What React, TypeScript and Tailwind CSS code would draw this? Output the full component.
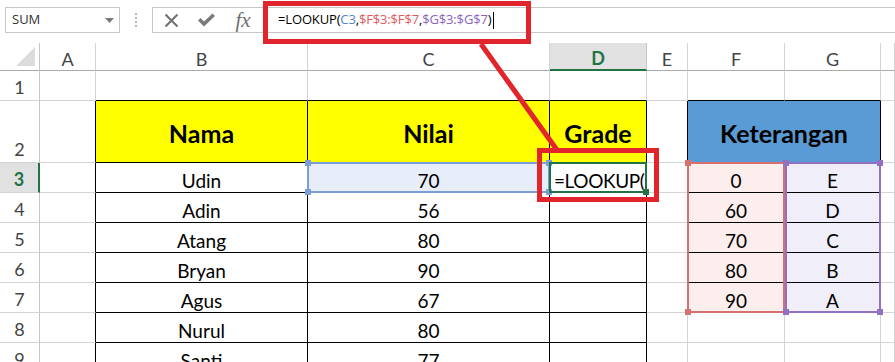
import React from "react";

const names = ["Udin", "Adin", "Atang", "Bryan", "Agus", "Nurul", "Santi"];
const nilai = [70, 56, 80, 90, 67, 80, 77];
const ket: [number, string][] = [
  [0, "E"],
  [60, "D"],
  [70, "C"],
  [80, "B"],
  [90, "A"],
];
const cols = ["A", "B", "C", "D", "E", "F", "G", ""];

// which gridlines are black (table borders) instead of light gray
function rightBlack(r: number, c: number) {
  if (r >= 2 && c >= 1 && c <= 4) return true;
  if (r >= 2 && r <= 7 && c >= 5 && c <= 7) return true;
  return false;
}
function bottomBlack(r: number, c: number) {
  if (r >= 1 && c >= 2 && c <= 4) return true;
  if (r >= 1 && r <= 7 && (c === 6 || c === 7)) return true;
  return false;
}

function cellText(r: number, c: number): string {
  if (r === 2) {
    if (c === 2) return "Nama";
    if (c === 3) return "Nilai";
    if (c === 4) return "Grade";
  }
  if (r >= 3) {
    if (c === 2) return names[r - 3] ?? "";
    if (c === 3) return String(nilai[r - 3] ?? "");
    if (c === 4 && r === 3) return "=LOOKUP(";
    if (r <= 7 && c === 6) return String(ket[r - 3][0]);
    if (r <= 7 && c === 7) return ket[r - 3][1];
  }
  return "";
}

function cellBg(r: number, c: number) {
  if (r === 2 && c >= 2 && c <= 4) return "bg-[#ffff00]";
  if (r === 3 && c === 3) return "bg-[#e8eef9]";
  if (r >= 3 && r <= 7 && c === 6) return "bg-[#fdeeee]";
  if (r >= 3 && r <= 7 && c === 7) return "bg-[#f0eef8]";
  return "bg-white";
}

function Cell({ r, c }: { r: number; c: number }) {
  const text = cellText(r, c);
  const rb = rightBlack(r, c) ? "border-r-black" : "border-r-[#d4d4d4]";
  const bb = bottomBlack(r, c) ? "border-b-black" : "border-b-[#d4d4d4]";
  const head = r === 2;
  const editing = r === 3 && c === 4;
  return (
    <div
      className={`border-r border-b ${rb} ${bb} ${cellBg(r, c)} flex items-center overflow-hidden whitespace-nowrap ${
        editing ? "justify-start pl-[4px] tracking-[-0.4px]" : "justify-center"
      } ${head ? "text-[25px] font-bold pt-[3px]" : "text-[19px] pt-[5px]"} leading-none text-black`}
    >
      {text}
    </div>
  );
}

function RowHeader({ r }: { r: number }) {
  const active = r === 3;
  return (
    <div
      className={`flex justify-center text-[18px] leading-none border-b border-b-[#d4d4d4] ${
        active
          ? "bg-[#e1e1e1] text-[#217346] font-bold border-r-2 border-r-[#217346]"
          : "bg-white text-[#444] border-r border-r-[#c6c6c6]"
      } ${r === 2 ? "items-end pb-[4px]" : "items-center pt-[3px]"}`}
    >
      {r}
    </div>
  );
}

function CornerSquare({ pos, color }: { pos: string; color: string }) {
  return <div className={`absolute w-[6px] h-[6px] ${pos} ${color}`} />;
}

export default function App() {
  const rows = [1, 2, 3, 4, 5, 6, 7, 8, 9];
  return (
    <div className="relative w-[895px] h-[362px] overflow-hidden bg-white font-['Lato',sans-serif]">
      {/* Formula bar */}
      <div className="h-[43px] flex items-start pt-[7px] font-['Open_Sans',sans-serif]">
        <div className="ml-[5px] w-[115px] h-[26px] border border-[#c6c6c6] flex items-center justify-between pl-[6px] pr-[5px]">
          <span className="text-[13px] text-[#333]">SUM</span>
          <svg width="9" height="5" viewBox="0 0 9 5">
            <polygon points="0,0 9,0 4.5,5" fill="#7a7a7a" />
          </svg>
        </div>
        <div className="w-[32px] h-[26px] flex flex-col items-center justify-center gap-[2px]">
          <div className="w-[2px] h-[2px] bg-[#b8b8b8]" />
          <div className="w-[2px] h-[2px] bg-[#b8b8b8]" />
          <div className="w-[2px] h-[2px] bg-[#b8b8b8]" />
          <div className="w-[2px] h-[2px] bg-[#b8b8b8]" />
        </div>
        <div className="flex-1 h-[26px] border-y border-l border-[#c6c6c6] flex items-center">
          <div className="w-[36px] flex justify-center">
            <svg width="15" height="15" viewBox="0 0 15 15">
              <path d="M1.5 1.5 L13.5 13.5 M13.5 1.5 L1.5 13.5" stroke="#6f6f6f" strokeWidth="2" />
            </svg>
          </div>
          <div className="w-[34px] flex justify-center">
            <svg width="19" height="14" viewBox="0 0 19 14">
              <path d="M1 7.5 L3.5 5 L7 8.5 L15.5 0.5 L18 3 L7 13.5 Z" fill="#7a7a7a" />
            </svg>
          </div>
          <div className="w-[40px] flex justify-center">
            <span className="font-['Liberation_Serif',serif] italic text-[21px] leading-none text-[#6f6f6f]">fx</span>
          </div>
          <div className="h-full border-l border-[#c6c6c6] flex items-center pl-[14px] text-[13px] tracking-[-0.15px] whitespace-nowrap">
            <span className="text-black">=LOOKUP(</span>
            <span className="text-[#4f83cc]">C3</span>
            <span className="text-black">,</span>
            <span className="text-[#e05a5a]">$F$3:$F$7</span>
            <span className="text-black">,</span>
            <span className="text-[#8a63c0]">$G$3:$G$7</span>
            <span className="text-black">)</span>
            <span className="ml-[2px] w-px h-[17px] bg-black" />
          </div>
        </div>
      </div>

      {/* Sheet grid */}
      <div className="relative">
        <div className="grid grid-cols-[40px_56px_212px_242px_97px_41px_97px_96px_1fr] grid-rows-[28px_30px_62px_30px_30px_30px_30px_30px_30px_30px]">
          {/* column headers */}
          <div className="relative border-r border-b border-r-[#c6c6c6] border-b-[#ababab] bg-white">
            <svg className="absolute right-[4px] bottom-[4px]" width="19" height="19" viewBox="0 0 19 19">
              <polygon points="19,0 19,19 0,19" fill="#dcdcdc" />
            </svg>
          </div>
          {cols.map((l, i) =>
            l === "D" ? (
              <div
                key={i}
                className="bg-[#e1e1e1] border-r border-r-[#c6c6c6] border-b-2 border-b-[#217346] flex items-center justify-center pt-[4px] text-[18px] leading-none font-bold text-[#217346]"
              >
                {l}
              </div>
            ) : (
              <div
                key={i}
                className="bg-white border-r border-b border-r-[#d4d4d4] border-b-[#ababab] flex items-center justify-center pt-[4px] text-[18px] leading-none text-[#444]"
              >
                {l}
              </div>
            )
          )}

          {rows.map((r) => (
            <React.Fragment key={r}>
              <RowHeader r={r} />
              {[1, 2, 3, 4, 5].map((c) => (
                <Cell key={c} r={r} c={c} />
              ))}
              {r === 2 ? (
                <div className="col-span-2 bg-[#5b9bd5] border-r border-b border-black flex items-center justify-center pt-[3px] text-[25px] leading-none font-bold text-black">
                  Keterangan
                </div>
              ) : (
                <>
                  <Cell r={r} c={6} />
                  <Cell r={r} c={7} />
                </>
              )}
              <Cell r={r} c={8} />
            </React.Fragment>
          ))}
        </div>

        {/* selection / reference highlights */}
        <div className="absolute inset-0 pointer-events-none grid grid-cols-[40px_56px_212px_242px_97px_41px_97px_96px_1fr] grid-rows-[28px_30px_62px_30px_30px_30px_30px_30px_30px_30px]">
          <div className="relative col-start-4 row-start-4 -ml-px -mt-px border-2 border-[#7b9ed8]">
            <CornerSquare pos="-left-[4px] -top-[4px]" color="bg-[#7b9ed8]" />
            <CornerSquare pos="-right-[4px] -top-[4px]" color="bg-[#7b9ed8]" />
            <CornerSquare pos="-left-[4px] -bottom-[4px]" color="bg-[#7b9ed8]" />
            <CornerSquare pos="-right-[4px] -bottom-[4px]" color="bg-[#7b9ed8]" />
          </div>
          <div className="relative col-start-5 row-start-4 -ml-px -mt-px border-2 border-[#217346]">
            <CornerSquare pos="-right-[4px] -bottom-[4px]" color="bg-[#217346]" />
          </div>
          <div className="relative col-start-7 row-start-4 row-span-5 -ml-px -mt-px border-2 border-[#d6716f]">
            <CornerSquare pos="-left-[4px] -top-[4px]" color="bg-[#d6716f]" />
            <CornerSquare pos="-left-[4px] -bottom-[4px]" color="bg-[#d6716f]" />
          </div>
          <div className="relative col-start-8 row-start-4 row-span-5 -mt-px border-2 border-[#9270c4]">
            <CornerSquare pos="-left-[4px] -top-[4px]" color="bg-[#9270c4]" />
            <CornerSquare pos="-right-[4px] -top-[4px]" color="bg-[#9270c4]" />
            <CornerSquare pos="-left-[4px] -bottom-[4px]" color="bg-[#9270c4]" />
            <CornerSquare pos="-right-[4px] -bottom-[4px]" color="bg-[#9270c4]" />
          </div>
        </div>
      </div>

      {/* red annotation */}
      <svg className="absolute left-0 top-0 pointer-events-none" width="895" height="362" viewBox="0 0 895 362">
        <rect x="265.5" y="3.5" width="263" height="38" fill="none" stroke="#e2242c" strokeWidth="5" />
        <line x1="481" y1="44" x2="557" y2="150" stroke="#e2242c" strokeWidth="5" />
        <rect x="539.5" y="150.5" width="117" height="49" fill="none" stroke="#e2242c" strokeWidth="5" />
      </svg>
    </div>
  );
}
